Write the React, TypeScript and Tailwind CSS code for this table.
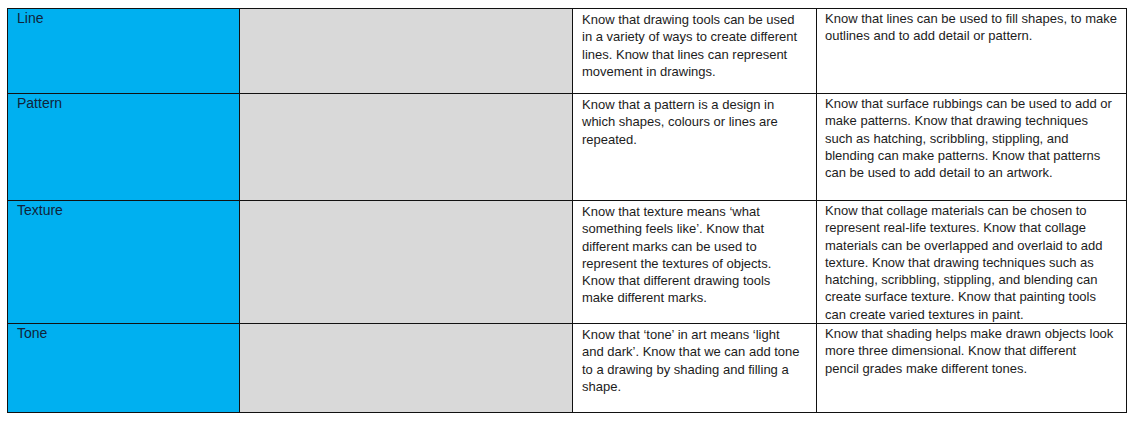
import React from "react";

type Row = {
  title: string;
  h: string;
  know: string[];
  more: string[];
};

const rows: Row[] = [
  {
    title: "Line",
    h: "h-[85px]",
    know: [
      "Know that drawing tools can be used",
      "in a variety of ways to create different",
      "lines. Know that lines can represent",
      "movement in drawings.",
    ],
    more: [
      "Know that lines can be used to fill shapes, to make",
      "outlines and to add detail or pattern.",
    ],
  },
  {
    title: "Pattern",
    h: "h-[107px]",
    know: [
      "Know that a pattern is a design in",
      "which shapes, colours or lines are",
      "repeated.",
    ],
    more: [
      "Know that surface rubbings can be used to add or",
      "make patterns. Know that drawing techniques",
      "such as hatching, scribbling, stippling, and",
      "blending can make patterns. Know that patterns",
      "can be used to add detail to an artwork.",
    ],
  },
  {
    title: "Texture",
    h: "h-[123px]",
    know: [
      "Know that texture means \u2018what",
      "something feels like\u2019. Know that",
      "different marks can be used to",
      "represent the textures of objects.",
      "Know that different drawing tools",
      "make different marks.",
    ],
    more: [
      "Know that collage materials can be chosen to",
      "represent real-life textures. Know that collage",
      "materials can be overlapped and overlaid to add",
      "texture. Know that drawing techniques such as",
      "hatching, scribbling, stippling, and blending can",
      "create surface texture. Know that painting tools",
      "can create varied textures in paint.",
    ],
  },
  {
    title: "Tone",
    h: "h-[89px]",
    know: [
      "Know that \u2018tone\u2019 in art means \u2018light",
      "and dark\u2019. Know that we can add tone",
      "to a drawing by shading and filling a",
      "shape.",
    ],
    more: [
      "Know that shading helps make drawn objects look",
      "more three dimensional. Know that different",
      "pencil grades make different tones.",
    ],
  },
];

const Lines = ({ lines }: { lines: string[] }) => (
  <>
    {lines.map((l, i) => (
      <span key={i} className="block whitespace-nowrap">
        {l}
      </span>
    ))}
  </>
);

const App = () => {
  return (
    <div className="h-[422px] w-[1137px] bg-white pl-[7px] pt-[8px] font-['Liberation_Sans',Arial,sans-serif] text-[13px] leading-[17.3px] text-[#1c1c1c]">
      <div className="grid w-[1120px] grid-cols-[232px_333px_244px_310px] border-t border-l border-[#111]">
        {rows.map((r) => (
          <React.Fragment key={r.title}>
            <div className={`${r.h} border-r border-b border-[#111] bg-[#00b0f0] pt-[1px] pl-[9px] text-[14px] text-[#10243a]`}>
              {r.title}
            </div>
            <div className={`${r.h} border-r border-b border-[#111] bg-[#d9d9d9]`}></div>
            <div className={`${r.h} border-r border-b border-[#111] pt-[2px] pl-[9px]`}>
              <Lines lines={r.know} />
            </div>
            <div className={`${r.h} border-r border-b border-[#111] pt-[1px] pl-[8px]`}>
              <Lines lines={r.more} />
            </div>
          </React.Fragment>
        ))}
      </div>
    </div>
  );
};

export default App;
